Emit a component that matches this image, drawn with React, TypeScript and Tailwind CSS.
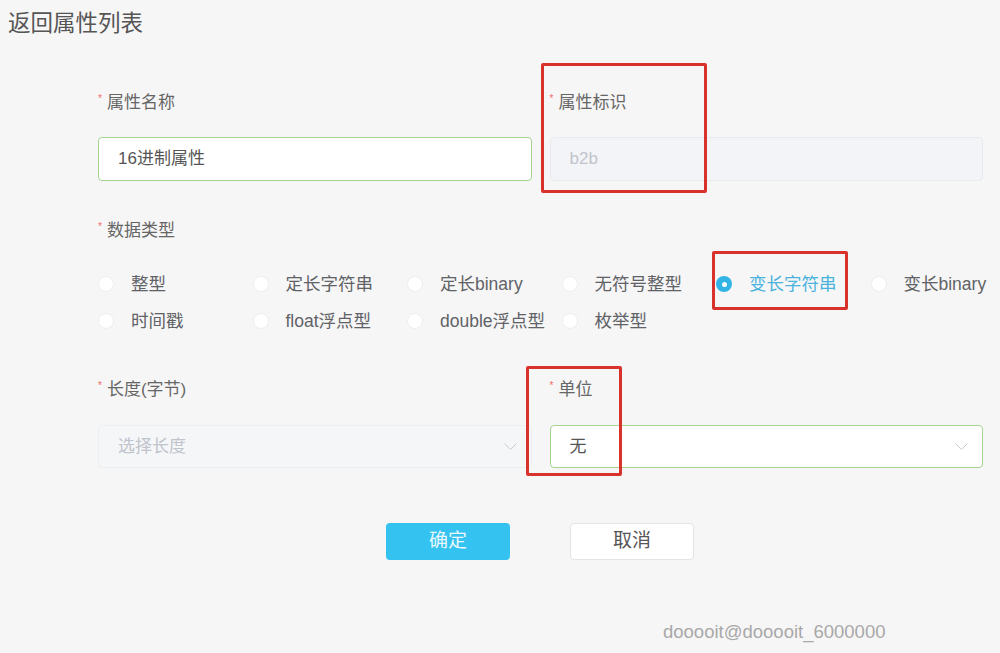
import React from "react";

const FONT = { fontFamily: '"Liberation Sans", "Noto Sans CJK SC", sans-serif' };

const TYPES = [
  "整型",
  "定长字符串",
  "定长binary",
  "无符号整型",
  "变长字符串",
  "变长binary",
  "时间戳",
  "float浮点型",
  "double浮点型",
  "枚举型",
];

function Label({ children }: { children: React.ReactNode }) {
  return (
    <div className="flex h-[24px] items-center text-[17px] leading-[24px] text-[#666]">
      <span className="-mt-[8px] mr-[5px] text-[10px] text-[#f06a6a]">*</span>
      {children}
    </div>
  );
}

function Chevron() {
  return (
    <svg width="13" height="8" viewBox="0 0 13 8" className="shrink-0">
      <polyline points="0.5,0.5 6.5,6.5 12.5,0.5" fill="none" stroke="#c9ccd2" strokeWidth="1" />
    </svg>
  );
}

function Radio({ label, checked }: { label: string; checked?: boolean }) {
  return (
    <div className="flex h-[24px] items-center gap-[17px]">
      {checked ? (
        <span className="flex h-[16px] w-[16px] items-center justify-center rounded-full bg-[#33b4e6]">
          <span className="h-[5px] w-[5px] rounded-full bg-white" />
        </span>
      ) : (
        <span className="h-[16px] w-[16px] rounded-full border border-[#eceef1] bg-white" />
      )}
      <span className={`whitespace-nowrap text-[17.5px] ${checked ? "text-[#4ab3dc]" : "text-[#606266]"}`}>
        {label}
      </span>
    </div>
  );
}

export default function App() {
  return (
    <div className="relative h-[653px] w-[1000px] overflow-hidden bg-[#f7f6f7]" style={FONT}>
      <h1 className="pl-[8px] pt-[10px] text-[22.5px] leading-[28px] text-[#555]">返回属性列表</h1>

      <div className="ml-[98px] w-[885px]">
        <div className="mt-[53px] grid grid-cols-2 gap-x-[18px]">
          <div>
            <Label>属性名称</Label>
            <div className="mt-[22px] flex h-[44px] items-center rounded-[4px] border border-[#a3d48e] bg-white px-[19px] text-[17px] text-[#555]">
              16进制属性
            </div>
          </div>
          <div>
            <Label>属性标识</Label>
            <div className="mt-[22px] flex h-[44px] items-center rounded-[4px] border border-[#e8eaee] bg-[#f3f4f7] px-[19px] text-[17px] text-[#c0c4cc]">
              b2b
            </div>
          </div>
        </div>

        <div className="mt-[38px]">
          <Label>数据类型</Label>
          <div className="mt-[29px] grid grid-cols-[repeat(6,154.5px)] gap-y-[13px]">
            {TYPES.map((t) => (
              <Radio key={t} label={t} checked={t === "变长字符串"} />
            ))}
          </div>
        </div>

        <div className="mt-[45px] grid grid-cols-2 gap-x-[18px]">
          <div>
            <Label>长度(字节)</Label>
            <div className="mt-[23px] flex h-[43px] items-center justify-between rounded-[4px] border border-[#eceef1] bg-[#f5f6f8] pl-[19px] pr-[14px] text-[17px] text-[#c0c4cc]">
              选择长度
              <Chevron />
            </div>
          </div>
          <div>
            <Label>单位</Label>
            <div className="mt-[23px] flex h-[43px] items-center justify-between rounded-[4px] border border-[#a3d48e] bg-white pl-[19px] pr-[14px] text-[17px] text-[#555]">
              无
              <Chevron />
            </div>
          </div>
        </div>
      </div>

      <div className="mt-[55px] flex gap-[60px] pl-[386px]">
        <button className="h-[37px] w-[124px] rounded-[4px] bg-[#34c3f0] text-[19px] text-[#eaf8fd]">确定</button>
        <button className="h-[37px] w-[124px] rounded-[4px] border border-[#e3e4e6] bg-white text-[19px] text-[#555]">
          取消
        </button>
      </div>

      <div className="mt-[60px] pl-[663px] text-[18.5px] leading-[24px] text-[#a8a8a8]">dooooit@dooooit_6000000</div>

      <div className="absolute left-[541px] top-[63px] h-[130px] w-[166px] rounded-[2px] border-[3px] border-[#d8322c]" />
      <div className="absolute left-[712px] top-[251px] h-[59px] w-[136px] rounded-[2px] border-[3px] border-[#d8322c]" />
      <div className="absolute left-[526px] top-[366px] h-[110px] w-[96px] rounded-[2px] border-[3px] border-[#d8322c]" />
    </div>
  );
}
